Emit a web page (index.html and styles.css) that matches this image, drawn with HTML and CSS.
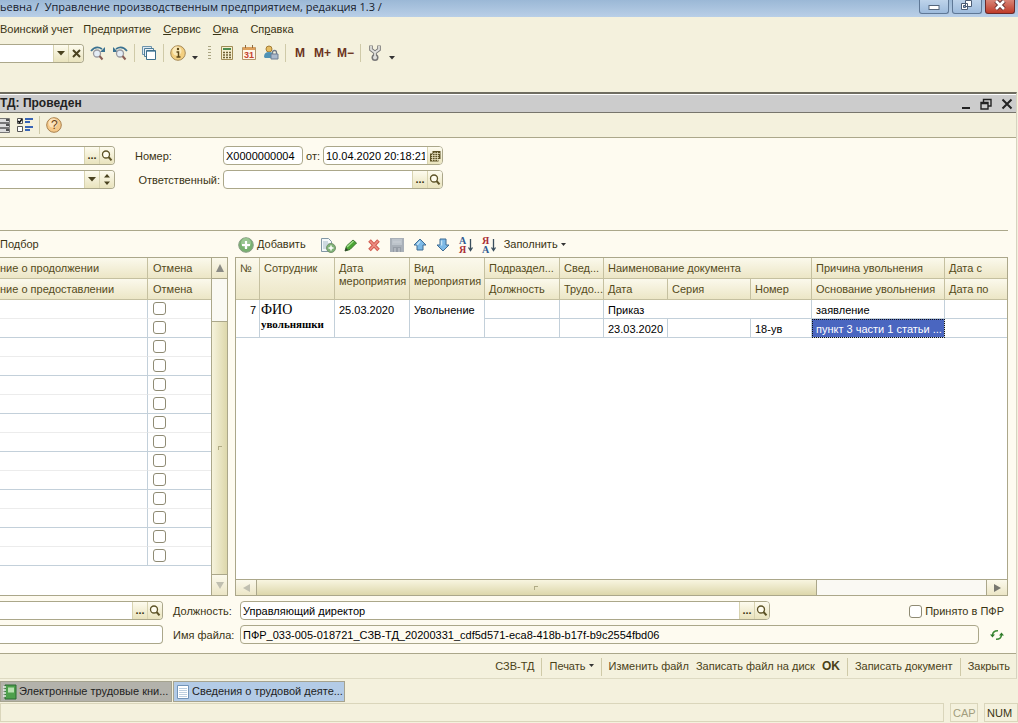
FILE: index.html
```
<!DOCTYPE html>
<html lang="ru">
<head>
    <meta charset="UTF-8">
    <meta name="viewport" content="width=device-width, initial-scale=1.0">
    <title>Управление производственным предприятием</title>
    <link rel="stylesheet" href="styles.css">
</head>
<body>
    <!-- Общие иконки -->
    <svg class="sprite" aria-hidden="true">
        <symbol id="i-lens" viewBox="0 0 12 12">
            <circle cx="5" cy="4.5" r="3.5" fill="#fffdf0" stroke="#5c5226" stroke-width="1.3"/>
            <path d="M7.5 7l3 3.400" stroke="#5c5226" stroke-width="2"/>
        </symbol>
        <symbol id="i-down" viewBox="0 0 8 5"><path d="M0 0h8L4 4.500z" fill="#4a4220"/></symbol>
    </svg>

    <header class="titlebar">
        <span class="titlebar-text">ьевна /&nbsp; Управление производственным предприятием, редакция 1.3 /</span>
        <div class="win-buttons">
            <button class="win-btn" aria-label="Свернуть"><svg width="30" height="13"><rect x="10" y="5.500" width="10" height="4" fill="#fff" stroke="#55667c"/></svg></button>
            <button class="win-btn" aria-label="Развернуть"><svg width="30" height="13"><path d="M13.500 .5h6v6h-6zM9.500 3.500h6v6h-6z" fill="#fff" stroke="#4b5c75"/><path d="M11.500 5.500h2v2h-2z" fill="#8fb0d4" stroke="#4b5c75"/></svg></button>
            <button class="win-btn win-close" aria-label="Закрыть окно"><svg width="30" height="13"><path d="M11 1l8 8M19 1l-8 8" stroke="#5b2a2a" stroke-width="4.500"/><path d="M11 1l8 8M19 1l-8 8" stroke="#fff" stroke-width="2.600"/></svg></button>
        </div>
    </header>

    <nav class="menu">
        <a href="#">Воинский учет</a>
        <a href="#">Предприятие</a>
        <a href="#"><u>С</u>ервис</a>
        <a href="#"><u>О</u>кна</a>
        <a href="#">Сп<u>р</u>авка</a>
    </nav>

    <!-- Главная панель инструментов -->
    <div class="toolbar main-tools">
        <div class="field field-cut search-field">
            <input type="text" aria-label="Поиск">
            <button aria-label="Список"><svg width="8" height="5"><use href="#i-down"/></svg></button>
            <button aria-label="Очистить"><svg width="9" height="9"><path d="M1 1l7 7M8 1L1 8" stroke="#4a4220" stroke-width="2"/></svg></button>
        </div>
        <button class="tool" aria-label="Найти далее"><svg width="16" height="16"><path d="M1 6Q6 0 12 4" fill="none" stroke="#3b7291" stroke-width="1.800"/><path d="M15 2v5h-5z" fill="#3b7291"/><circle cx="7" cy="8.500" r="3.500" fill="#e4edf6" stroke="#9a9aa0" stroke-width="1.300"/><path d="M9.500 11l3 3.500" stroke="#8a5e55" stroke-width="2"/></svg></button>
        <button class="tool" aria-label="Найти назад"><svg width="16" height="16"><path d="M15 6Q10 0 4 4" fill="none" stroke="#3b7291" stroke-width="1.800"/><path d="M1 2v5h5z" fill="#3b7291"/><circle cx="8" cy="8.500" r="3.500" fill="#e4edf6" stroke="#9a9aa0" stroke-width="1.300"/><path d="M10.500 11l3 3.500" stroke="#8a5e55" stroke-width="2"/></svg></button>
        <span class="sep"></span>
        <button class="tool" aria-label="Окна"><svg width="16" height="16"><path d="M1.500 1.500h9v8h-9z" fill="#dfeaf2" stroke="#6d94ac"/><path d="M3.500 3.500h9v8h-9z" fill="#e9f1f6" stroke="#4f7e99"/><path d="M5.500 5.500h9v9h-9z" fill="#fff" stroke="#3d6f8c"/><path d="M6 6.500h8" stroke="#7ea4ba"/></svg></button>
        <span class="sep"></span>
        <button class="tool" aria-label="Информация"><svg width="16" height="16"><circle cx="8" cy="8" r="7.300" fill="#f3cf80" stroke="#a68a58"/><circle cx="7" cy="6" r="4.500" fill="#fbe9b8"/><path d="M6.500 7h2v5M6.500 12h4" stroke="#5d4718" stroke-width="1.500" fill="none"/><circle cx="8" cy="4" r="1.200" fill="#5d4718"/></svg></button>
        <svg class="mini-arrow" width="6" height="4"><path d="M0 0h6L3 3.500z" fill="#333"/></svg>
        <span class="grip"></span>
        <button class="tool" aria-label="Калькулятор"><svg width="14" height="16"><path d="M1.500 1.500h11v13h-11z" fill="#f7efcf" stroke="#a08c55"/><path d="M3 3h8v2H3z" fill="#4d8b4f"/><path d="M3 7.500h8M3 10h8M3 12.500h8" stroke="#6d6034" stroke-width="1.400" stroke-dasharray="2 1"/></svg></button>
        <button class="tool" aria-label="Календарь"><svg class="cal" width="14" height="16"><path d="M.5 2.500h13v12H.5z" fill="#fff6e6" stroke="#b39468"/><path d="M1 2h12v3H1z" fill="#dda05c"/><path d="M3.500 0v3M10.500 0v3" stroke="#8a6b42"/><text x="2" y="13">31</text></svg></button>
        <button class="tool" aria-label="Пользователь"><svg width="16" height="16"><circle cx="6" cy="4" r="3" fill="#e6bd62" stroke="#a37d35"/><path d="M1 12q0-5 5-5t4 4v2H2z" fill="#4f93b5"/><path d="M9.500 9V7.500a2 2 0 014 0V9" fill="none" stroke="#707b88" stroke-width="1.300"/><path d="M8 9h7v5H8z" fill="#aab9cc" stroke="#6f7f94"/></svg></button>
        <span class="sep"></span>
        <button class="tool mem">M</button>
        <button class="tool mem">M+</button>
        <button class="tool mem">M−</button>
        <span class="sep"></span>
        <button class="tool" aria-label="Настройка"><svg width="14" height="18"><path d="M3 1.500v4l4 3 4-3v-4M7 8v5" fill="none" stroke="#777" stroke-width="3.600"/><circle cx="7" cy="13.500" r="3.500" fill="#777"/><path d="M3 2v3.500l4 3 4-3V2M7 8v5" fill="none" stroke="#e0e0dc" stroke-width="1.800"/><circle cx="7" cy="13.500" r="2" fill="#e0e0dc"/></svg></button>
        <svg class="mini-arrow" width="6" height="4"><path d="M0 0h6L3 3.500z" fill="#333"/></svg>
    </div>

    <!-- Окно документа -->
    <main class="doc">
        <div class="doc-title">
            <h1>ТД: Проведен</h1>
            <button aria-label="Свернуть документ"><svg width="10" height="12"><path d="M1 10h8" stroke="#222" stroke-width="2"/></svg></button>
            <button aria-label="Восстановить документ"><svg width="12" height="12"><path d="M3.500 4V1.500h7.500V8H8" fill="none" stroke="#222" stroke-width="1.400"/><path d="M1 4.500h7V11H1zM1 5.500h7" fill="none" stroke="#222" stroke-width="1.400"/></svg></button>
            <button aria-label="Закрыть документ"><svg width="12" height="12"><path d="M1.500 1.500l9 9M10.500 1.500l-9 9" stroke="#222" stroke-width="2"/></svg></button>
        </div>
        <div class="toolbar doc-tools">
            <button class="tool" aria-label="Список"><svg width="10" height="16"><path d="M0 1.500h9.500v4H0M0 6.500h9.500v4H0M0 11.500h9.500v4H0" fill="#ddd" stroke="#777"/><path d="M6 3h3M6 8h3M6 13h3" stroke="#222" stroke-width="1.500"/></svg></button>
            <button class="tool" aria-label="Отборы"><svg width="17" height="16"><path d="M1.500 1.500h5v5h-5zM1.500 9.500h5v5h-5z" fill="#fff" stroke="#555"/><path d="M2 4l1.500 1.500L6 2" fill="none" stroke="#111" stroke-width="1.500"/><path d="M9 2h8M9 5h5M9 10h8M9 13h5" stroke="#3864b5" stroke-width="1.800"/></svg></button>
            <span class="sep"></span>
            <button class="tool" aria-label="Справка"><svg class="help" width="16" height="16"><circle cx="8" cy="8" r="7.300" fill="#f5c98a" stroke="#a9804d"/><circle cx="7" cy="6" r="4.500" fill="#fbe2bb"/><text x="5" y="12">?</text></svg></button>
        </div>

        <div class="form">
            <section class="props">
                <div class="row">
                    <div class="field field-cut left-field"><input type="text" aria-label="Организация"><button aria-label="Выбрать организацию">...</button><button aria-label="Открыть организацию"><svg width="12" height="12"><use href="#i-lens"/></svg></button></div>
                    <label class="prop-label" for="num">Номер:</label>
                    <div class="field num-field"><input type="text" id="num" value="X0000000004"></div>
                    <label class="from" for="date">от:</label>
                    <div class="field date-field"><input type="text" id="date" value="10.04.2020 20:18:21"><button aria-label="Выбрать дату"><svg width="12" height="12"><path d="M3.500 1h8v8h-2v2.500H1V3.500h2.500z" fill="#5c5226"/><path d="M2 5.500h8M2 7.500h8M2 9.500h8M4 3.500h7M3.500 4v7M6 2v9M8.500 2v9" stroke="#f1ebc8" stroke-width=".7"/></svg></button></div>
                </div>
                <div class="row">
                    <div class="field field-cut left-field"><input type="text" aria-label="Период"><button aria-label="Список периодов"><svg width="8" height="5"><use href="#i-down"/></svg></button><button aria-label="Изменить период"><svg width="6" height="11"><path d="M0 3.500h6L3 0zM0 7.500h6L3 11z" fill="#4a4220"/></svg></button></div>
                    <label class="prop-label prop-right" for="resp">Ответственный:</label>
                    <div class="field resp-field"><input type="text" id="resp"><button aria-label="Выбрать ответственного">...</button><button aria-label="Открыть ответственного"><svg width="12" height="12"><use href="#i-lens"/></svg></button></div>
                </div>
            </section>

            <section class="panes">
                <!-- Левая таблица -->
                <div class="pane pane-left">
                    <div class="toolbar pane-tools"><button class="tool">Подбор</button></div>
                    <div class="grid">
                        <div class="grid-body">
                            <table class="left-table">
                                <colgroup><col><col class="w-cancel"></colgroup>
                                <thead>
                                    <tr><th class="cut">ние о продолжении</th><th>Отмена</th></tr>
                                    <tr><th class="cut">ние о предоставлении</th><th>Отмена</th></tr>
                                </thead>
                                <tbody>
                                    <tr><td></td><td><input type="checkbox" aria-label="Отмена"></td></tr>
                                    <tr><td></td><td><input type="checkbox" aria-label="Отмена"></td></tr>
                                    <tr><td></td><td><input type="checkbox" aria-label="Отмена"></td></tr>
                                    <tr><td></td><td><input type="checkbox" aria-label="Отмена"></td></tr>
                                    <tr><td></td><td><input type="checkbox" aria-label="Отмена"></td></tr>
                                    <tr><td></td><td><input type="checkbox" aria-label="Отмена"></td></tr>
                                    <tr><td></td><td><input type="checkbox" aria-label="Отмена"></td></tr>
                                    <tr><td></td><td><input type="checkbox" aria-label="Отмена"></td></tr>
                                    <tr><td></td><td><input type="checkbox" aria-label="Отмена"></td></tr>
                                    <tr><td></td><td><input type="checkbox" aria-label="Отмена"></td></tr>
                                    <tr><td></td><td><input type="checkbox" aria-label="Отмена"></td></tr>
                                    <tr><td></td><td><input type="checkbox" aria-label="Отмена"></td></tr>
                                    <tr><td></td><td><input type="checkbox" aria-label="Отмена"></td></tr>
                                    <tr><td></td><td><input type="checkbox" aria-label="Отмена"></td></tr>
                                </tbody>
                            </table>
                        </div>
                        <div class="vscroll">
                            <button aria-label="Вверх"><svg width="8" height="8"><path d="M0 8h8L4 0z" fill="#8b8b85"/></svg></button>
                            <div class="track"></div>
                            <div class="thumb"><span class="notch"></span></div>
                            <button aria-label="Вниз"><svg width="8" height="7"><path d="M0 0h8L4 7z" fill="#c0bfb0"/></svg></button>
                        </div>
                    </div>
                </div>

                <!-- Правая таблица -->
                <div class="pane pane-right">
                    <div class="toolbar pane-tools">
                        <button class="tool add"><svg width="16" height="16"><circle cx="8" cy="8" r="7.300" fill="#78b170" stroke="#8a9e86"/><circle cx="8" cy="6" r="5" fill="#9ac692"/><path d="M8 4v8M4 8h8" stroke="#fff" stroke-width="2.200"/></svg><span><u>Д</u>обавить</span></button>
                        <button class="tool" aria-label="Скопировать"><svg width="16" height="16"><path d="M1.500 1.500h7l3 3v10h-10z" fill="#f4f8fa" stroke="#8197a5"/><path d="M3 5h5M3 7h7M3 9h4M3 11h4" stroke="#a6bac6"/><circle cx="11" cy="11" r="4.500" fill="#7fb377" stroke="#77936f"/><path d="M11 8.500v5M8.500 11h5" stroke="#fff" stroke-width="1.500"/></svg></button>
                        <button class="tool" aria-label="Изменить"><svg width="16" height="16"><path d="M2 14l1.500-5L10 3l3.500 3L7 12.500z" fill="#4aa534" stroke="#35702a"/><path d="M4 10l6.500-6" stroke="#a0dc8a" stroke-width="1.500"/><path d="M2 14l1-3 2 2z" fill="#333"/></svg></button>
                        <button class="tool" aria-label="Удалить"><svg width="16" height="16"><path d="M3.500 3.500l9 9.500M12.500 3.500l-9 9.500" stroke="#cf5a4e" stroke-width="3.600"/><path d="M4 4l8 8.500M12 4l-8 8.500" stroke="#ee8d83" stroke-width="1.800"/></svg></button>
                        <button class="tool" aria-label="Записать"><svg width="16" height="16"><path d="M1 1h14v14H1z" fill="#a9b0b8"/><path d="M3 2h10v6H3z" fill="#bdc4cb"/><path d="M4 10h8v5H4z" fill="#969da6"/><path d="M4 5h8M6 11v4M10 11v4" stroke="#cbd0d6"/></svg></button>
                        <button class="tool" aria-label="Переместить вверх"><svg width="16" height="16"><path d="M8 2l6 6h-3v5H5V8H2z" fill="#7cb9e6" stroke="#3f6d94"/><path d="M5 8l3-3.500" stroke="#c4e4f7" stroke-width="1.500"/></svg></button>
                        <button class="tool" aria-label="Переместить вниз"><svg width="16" height="16"><path d="M8 14l6-6h-3V2H5v6H2z" fill="#7cb9e6" stroke="#3f6d94"/><path d="M6.500 3.500v5" stroke="#c4e4f7" stroke-width="1.500"/></svg></button>
                        <button class="tool" aria-label="Сортировать по возрастанию"><svg class="sort" width="16" height="18"><text x="1" y="8" fill="#2f5b92">А</text><text x="1" y="17" fill="#a92e35">Я</text><path d="M12.500 3v11M10.500 11.500l2 3 2-3" fill="none" stroke="#3b4f5e" stroke-width="1.300"/></svg></button>
                        <button class="tool" aria-label="Сортировать по убыванию"><svg class="sort" width="16" height="18"><text x="1" y="8" fill="#a92e35">Я</text><text x="1" y="17" fill="#2f5b92">А</text><path d="M12.500 3v11M10.500 11.500l2 3 2-3" fill="none" stroke="#3b4f5e" stroke-width="1.300"/></svg></button>
                        <button class="tool fill">Заполнить <svg width="5" height="3"><path d="M0 0h5L2.500 3z" fill="#333"/></svg></button>
                    </div>
                    <div class="grid grid-right">
                        <div class="grid-body">
                            <table class="right-table">
                                <colgroup>
                                    <col class="w-n"><col class="w-std"><col class="w-std"><col class="w-std"><col class="w-std">
                                    <col class="w-info"><col class="w-date"><col class="w-series"><col class="w-num"><col class="w-reason"><col>
                                </colgroup>
                                <thead>
                                    <tr>
                                        <th rowspan="2">№</th>
                                        <th rowspan="2">Сотрудник</th>
                                        <th rowspan="2">Дата<br>мероприятия</th>
                                        <th rowspan="2">Вид<br>мероприятия</th>
                                        <th>Подраздел...</th>
                                        <th>Свед...</th>
                                        <th colspan="3">Наименование документа</th>
                                        <th>Причина увольнения</th>
                                        <th>Дата с</th>
                                    </tr>
                                    <tr>
                                        <th>Должность</th>
                                        <th>Трудо...</th>
                                        <th>Дата</th>
                                        <th>Серия</th>
                                        <th>Номер</th>
                                        <th>Основание увольнения</th>
                                        <th>Дата по</th>
                                    </tr>
                                </thead>
                                <tbody>
                                    <tr>
                                        <td rowspan="2" class="n">7</td>
                                        <td rowspan="2" class="person"><span class="fio">ФИО</span><span class="nick">увольняшки</span></td>
                                        <td rowspan="2">25.03.2020</td>
                                        <td rowspan="2">Увольнение</td>
                                        <td></td>
                                        <td></td>
                                        <td colspan="3">Приказ</td>
                                        <td>заявление</td>
                                        <td></td>
                                    </tr>
                                    <tr>
                                        <td></td>
                                        <td></td>
                                        <td>23.03.2020</td>
                                        <td></td>
                                        <td>18-ув</td>
                                        <td class="selected">пункт 3 части 1 статьи ...</td>
                                        <td></td>
                                    </tr>
                                </tbody>
                            </table>
                        </div>
                        <div class="hscroll">
                            <button aria-label="Влево"><svg width="7" height="8"><path d="M7 0v8L0 4z" fill="#c0bfb0"/></svg></button>
                            <div class="thumb"><span class="notch"></span></div>
                            <div class="track"></div>
                            <button aria-label="Вправо"><svg width="7" height="8"><path d="M0 0v8l7-4z" fill="#77776f"/></svg></button>
                        </div>
                    </div>
                </div>
            </section>

            <section class="bottom">
                <div class="row">
                    <div class="field field-cut boss-field"><input type="text" aria-label="Руководитель"><button aria-label="Выбрать руководителя">...</button><button aria-label="Открыть руководителя"><svg width="12" height="12"><use href="#i-lens"/></svg></button></div>
                    <label class="bottom-label" for="post">Должность:</label>
                    <div class="field post-field"><input type="text" id="post" value="Управляющий директор"><button aria-label="Выбрать должность">...</button><button aria-label="Открыть должность"><svg width="12" height="12"><use href="#i-lens"/></svg></button></div>
                    <label class="accepted"><input type="checkbox">Принято в ПФР</label>
                </div>
                <div class="row">
                    <div class="field field-cut boss-field"><input type="text" aria-label="Комментарий"></div>
                    <label class="bottom-label" for="file">Имя файла:</label>
                    <div class="field readonly file-field"><input type="text" id="file" readonly value="ПФР_033-005-018721_СЗВ-ТД_20200331_cdf5d571-eca8-418b-b17f-b9c2554fbd06"></div>
                    <button class="tool refresh" aria-label="Обновить"><svg width="14" height="12"><path d="M2.500 6Q3 1.500 8 1.700M11.500 6Q11 10.500 6 10.300" fill="none" stroke="#3d8a35" stroke-width="1.600"/><path d="M0 5.500h5L2.500 8.500zM14 6.500H9L11.500 3.500z" fill="#2f7a2a"/></svg></button>
                </div>
            </section>
        </div>

        <footer class="actions">
            <button>СЗВ-ТД</button>
            <span class="sep"></span>
            <button>Печать <svg class="print-arrow" width="5" height="3"><path d="M0 0h5L2.500 3z" fill="#333"/></svg></button>
            <span class="sep"></span>
            <button>Изменить файл</button>
            <button>Записать файл на диск</button>
            <button class="ok">OK</button>
            <span class="sep"></span>
            <button>Записать документ</button>
            <span class="sep"></span>
            <button>Закрыть</button>
        </footer>
    </main>

    <!-- Панель открытых окон -->
    <div class="windows">
        <button class="window-tab"><svg width="14" height="16"><path d="M2 1h11v14H2z" fill="#4ea04c" stroke="#2b6b32"/><path d="M5 3.500h6v5H5z" fill="#b9e0b0"/><path d="M0 3h3M0 6h3M0 9h3M0 12h3" stroke="#e7eee7" stroke-width="1.500"/></svg>Электронные трудовые кни...</button>
        <button class="window-tab current"><svg width="14" height="16"><path d="M1.500 1.500h11v13h-11z" fill="#fff" stroke="#7294b8"/><path d="M3 4.500h8M3 6.500h8M3 8.500h8M3 10.500h8M3 12.500h8" stroke="#bdcfe0"/></svg>Сведения о трудовой деяте...</button>
    </div>

    <div class="status">
        <span class="status-text"></span>
        <span class="status-cap">CAP</span>
        <span class="status-num">NUM</span>
    </div>
</body>
</html>
```
FILE: styles.css
```
* {
    box-sizing: border-box;
}

body {
    margin: 0;
    display: flex;
    flex-direction: column;
    height: 100vh;
    overflow: hidden;
    font-family: "Liberation Sans", Arial, sans-serif;
    font-size: 11px;
    line-height: 13px;
    background-color: #f4f1dd;
    color: #3a3413;
}

button,
input {
    font: inherit;
    color: inherit;
}

button {
    display: flex;
    align-items: center;
    justify-content: center;
    padding: 0;
    border: none;
    background: none;
    white-space: nowrap;
    cursor: pointer;
}

svg {
    flex: none;
}

.sprite {
    position: absolute;
    width: 0;
    height: 0;
}

/* Заголовок окна */
.titlebar {
    display: flex;
    justify-content: space-between;
    height: 17px;
    background: linear-gradient(#9bb8d6, #b9cfe7);
    color: #16202c;
}

.titlebar-text {
    font-family: "Open Sans", "Noto Sans", sans-serif;
    font-size: 11px;
    line-height: 13px;
    white-space: nowrap;
}

.win-buttons {
    display: flex;
    gap: 3px;
    padding-right: 3px;
}

.win-btn {
    width: 30px;
    height: 14px;
    border: 1px solid #5f7896;
    border-top: none;
    border-radius: 0 0 3px 3px;
    background: linear-gradient(#bed3ea, #9dbbdc);
    overflow: hidden;
}

.win-close {
    border-color: #6b2a2a;
    background: linear-gradient(#d98577, #bf3b28);
}

/* Меню */
.menu {
    display: flex;
    gap: 10px;
    height: 24px;
    align-items: center;
}

.menu a {
    color: inherit;
    text-decoration: none;
    white-space: nowrap;
}

.menu a + a + a {
    margin-left: 2px;
}

/* Панели инструментов */
.toolbar {
    display: flex;
    align-items: center;
}

.tool {
    flex: none;
}

.sep {
    flex: none;
    width: 1px;
    height: 18px;
    background-color: #cfcaa8;
}

.main-tools {
    gap: 6px;
    height: 51px;
    padding-bottom: 27px;
}

.main-tools .tool {
    min-width: 16px;
}

.search-field {
    width: 84px;
}

.mini-arrow {
    margin-top: 10px;
}

.grip {
    width: 3px;
    height: 15px;
    margin: 0 2px 0 4px;
    background: repeating-linear-gradient(#aaa582 0 1px, transparent 1px 3px);
}

.mem {
    font-size: 12px;
    font-weight: bold;
    color: #6b3420;
}

.cal text {
    font-size: 9px;
    font-weight: bold;
    fill: #c5432f;
}

.help text {
    font-size: 12px;
    fill: #6b4315;
}

.sort text {
    font-family: "Liberation Serif", serif;
    font-size: 10px;
    font-weight: bold;
}

/* Поля ввода */
.field {
    display: flex;
    flex: none;
    height: 19px;
    border: 1px solid #aba78a;
    border-radius: 4px;
    background-color: #fff;
    overflow: hidden;
}

/* Поле, уходящее за левый край окна */
.field-cut {
    border-left: none;
    border-radius: 0 4px 4px 0;
}

.field input {
    flex: 1;
    min-width: 0;
    width: 0;
    padding: 1px 2px 0;
    border: none;
    background: none;
    color: #000;
    outline: none;
}

.field button {
    width: 15px;
    border-left: 1px solid #d8d3b0;
    background: linear-gradient(#fdfbee, #e9e3bd);
    font-weight: bold;
}

.field.readonly {
    background-color: #fefbf0;
}

input[type="checkbox"] {
    appearance: none;
    flex: none;
    width: 13px;
    height: 13px;
    margin: 0;
    border: 1px solid #8f8b74;
    border-radius: 3px;
    background-color: #fff;
}

/* Окно документа */
.doc {
    display: flex;
    flex: 1;
    flex-direction: column;
    min-height: 0;
    margin-right: 1px;
    border-top: 2px solid #6f6d60;
    border-right: 1px solid #d6d3c0;
    border-bottom: 1px solid #dedac2;
}

.doc-title {
    display: flex;
    align-items: center;
    gap: 9px;
    height: 19px;
    padding-right: 3px;
    border-top: 1px solid #fff;
    border-bottom: 1px solid #77756c;
    background-color: #ccc;
}

.doc-title h1 {
    flex: 1;
    margin: 0;
    font-size: 12px;
    color: #222;
}

.doc-tools {
    gap: 6px;
    height: 25px;
    border-bottom: 1px solid #aba78a;
}

.form {
    display: flex;
    flex: 1;
    flex-direction: column;
    min-height: 0;
    padding-right: 8px;
    background-color: #fefbf0;
}

.row {
    display: flex;
    align-items: center;
}

.props {
    display: flex;
    flex-direction: column;
    gap: 5px;
    height: 93px;
    padding-top: 8px;
    border-bottom: 1px solid #aba78a;
}

.left-field {
    width: 115px;
}

.row label {
    padding-top: 1px;
}

.prop-label {
    width: 88px;
    margin-left: 20px;
}

.prop-right {
    padding-right: 3px;
    text-align: right;
}

.num-field {
    width: 80px;
}

.from {
    width: 20px;
    padding-left: 3px;
}

.date-field {
    width: 120px;
}

.resp-field {
    width: 220px;
}

/* Таблицы */
.panes {
    display: flex;
    flex: 1;
    gap: 7px;
    min-height: 0;
}

.pane {
    display: flex;
    flex-direction: column;
    min-width: 0;
}

.pane-left {
    flex: 0 0 228px;
}

.pane-right {
    flex: 1;
}

.pane-tools {
    gap: 7px;
    height: 26px;
    padding-top: 1px;
}

.pane-right .pane-tools {
    padding-left: 3px;
}

.add {
    gap: 3px;
    margin-right: 7px;
}

.fill {
    gap: 3px;
}

.grid {
    display: flex;
    flex: 1;
    min-height: 0;
    border: 1px solid #aba78a;
    background-color: #fff;
}

.pane-left .grid {
    border-left: none;
}

.grid-right {
    flex-direction: column;
}

.grid-body {
    flex: 1;
    min-width: 0;
    min-height: 0;
    overflow: hidden;
}

table {
    width: 100%;
    border-collapse: separate;
    border-spacing: 0;
    table-layout: fixed;
}

th,
td {
    padding: 0 0 0 4px;
    border-right: 1px solid #c3d0da;
    border-bottom: 1px solid #c3d0da;
    text-align: left;
    vertical-align: top;
    white-space: nowrap;
    overflow: hidden;
}

th {
    height: 21px;
    padding-top: 4px;
    border-color: #c5c0a0;
    background: linear-gradient(#fbf9ec, #ece6c6);
    font-weight: normal;
    color: #554b1a;
}

td {
    height: 19px;
    padding-top: 4px;
    color: #000;
}

tr > :last-child {
    border-right: none;
}

.left-table tr > :last-child {
    padding-left: 5px;
}

.cut {
    padding-left: 0;
}

.left-table tbody tr:nth-child(odd) td {
    border-bottom-color: #ececec;
}

.left-table td {
    padding-top: 2px;
}

.left-table td input {
    display: block;
}

.w-cancel { width: 63px; }
.w-n { width: 24px; }
.w-std { width: 75px; }
.w-info { width: 44px; }
.w-date { width: 64px; }
.w-series { width: 83px; }
.w-num { width: 61px; }
.w-reason { width: 133px; }

.right-table .n {
    padding-right: 3px;
    text-align: right;
}

.right-table .person {
    padding: 2px 0 0 1px;
    font-family: "Liberation Serif", serif;
}

.person span {
    display: block;
}

.fio {
    font-size: 14px;
    line-height: 16px;
}

.nick {
    font-size: 11px;
    font-weight: bold;
    line-height: 12px;
}

.right-table .selected {
    outline: 1px dotted #111;
    outline-offset: -1px;
    background-color: #4a66c0;
    color: #fff;
}

/* Полосы прокрутки */
.vscroll {
    display: flex;
    flex: 0 0 16px;
    flex-direction: column;
    border-left: 1px solid #aba78a;
}

.hscroll {
    display: flex;
    flex: 0 0 16px;
    border-top: 1px solid #aba78a;
}

.vscroll button,
.hscroll button {
    flex: 0 0 20px;
    background: linear-gradient(#fbf9ec, #ece6c6);
}

.track {
    background-color: #faf9f3;
}

.thumb {
    display: flex;
    align-items: center;
    justify-content: center;
    border: 0 solid #aba78a;
}

.notch {
    width: 4px;
    height: 4px;
    border-top: 1px solid #b0ab85;
    border-left: 1px solid #b0ab85;
}

.vscroll .track {
    flex: 42;
    border-top: 1px solid #aba78a;
}

.vscroll .thumb {
    flex: 254;
    border-width: 1px 0;
    background: linear-gradient(90deg, #f6f3dc, #ddd7ab);
}

.hscroll .thumb {
    flex: 561;
    border-width: 0 1px;
    background: linear-gradient(#f8f5e0, #ddd7ab);
}

.hscroll .track {
    flex: 170;
    border-right: 1px solid #aba78a;
}

/* Нижние реквизиты */
.bottom {
    display: flex;
    flex-direction: column;
    gap: 5px;
    padding: 5px 0 9px;
}

.boss-field {
    width: 163px;
}

.bottom-label {
    width: 67px;
    margin-left: 10px;
}

.post-field {
    width: 530px;
}

.file-field {
    flex: 1;
}

.accepted {
    display: flex;
    align-items: center;
    gap: 3px;
    margin: 0 4px 0 auto;
}

.refresh {
    margin: 0 4px 0 11px;
}

.actions {
    display: flex;
    align-items: center;
    justify-content: flex-end;
    gap: 7px;
    height: 25px;
    padding: 1px 6px 0 0;
    border-top: 1px solid #aba78a;
}

.actions button {
    color: #4a4118;
}

.print-arrow {
    margin: 0 0 3px 3px;
}

.actions .ok {
    font-size: 12px;
    font-weight: bold;
}

/* Открытые окна */
.windows {
    display: flex;
    gap: 1px;
    padding: 2px 0 1px;
}

.window-tab {
    justify-content: flex-start;
    gap: 2px;
    width: 172px;
    height: 21px;
    padding-left: 2px;
    border: 1px solid #a5a38f;
    background-color: #b3b2ab;
    color: #222;
}

.window-tab.current {
    background-color: #b3cbe6;
}

/* Строка состояния */
.status {
    display: flex;
    gap: 6px;
    height: 20px;
    padding-bottom: 1px;
}

.status span {
    padding: 3px 2px;
    border: 1px solid #dad6bb;
}

.status-text {
    flex: 1;
}

.status-cap {
    width: 28px;
    color: #a29d7e;
}

.status-num {
    width: 34px;
}
```
